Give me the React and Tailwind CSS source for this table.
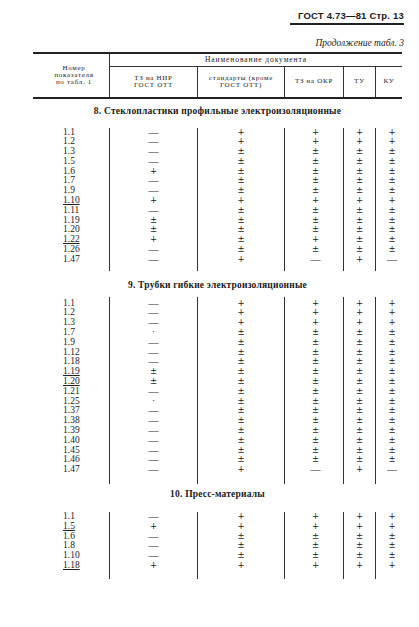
import React from "react";

// ширины колонок таблицы, px
const COLS = ["w-[77px]", "w-[87px]", "w-[87px]", "w-[59px]", "w-[32px]", "w-[27px]"];

const SECTIONS = [
  {
    title: "8. Стеклопластики профильные электроизоляционные",
    titleClass: "h-[29px] pb-[3px]",
    top: "h-[0px]",
    bottom: "h-[6px]",
    rows: [
      ["1.1", "—", "+", "+", "+", "+"],
      ["1.2", "—", "+", "+", "+", "+"],
      ["1.3", "—", "±", "±", "±", "±"],
      ["1.5", "—", "±", "±", "±", "±"],
      ["1.6", "+", "±", "±", "±", "±"],
      ["1.7", "—", "±", "±", "±", "±"],
      ["1.9", "—", "±", "±", "±", "±"],
      ["1.10", "+", "+", "+", "+", "+", true],
      ["1.11", "—", "±", "±", "±", "±"],
      ["1.19", "±", "±", "±", "±", "±"],
      ["1.20", "±", "±", "±", "±", "±"],
      ["1.22", "+", "±", "+", "±", "±", true],
      ["1.26", "—", "±", "±", "±", "±"],
      ["1.47", "—", "+", "—", "+", "—"],
    ],
  },
  {
    title: "9. Трубки гибкие электроизоляционные",
    titleClass: "h-[26px] pt-[2px]",
    top: "h-[2px]",
    bottom: "h-[9px]",
    rows: [
      ["1.1", "—", "+", "+", "+", "+"],
      ["1.2", "—", "+", "+", "+", "+"],
      ["1.3", "—", "+", "+", "+", "+"],
      ["1.7", "·", "±", "±", "±", "±"],
      ["1.9", "—", "±", "±", "±", "±"],
      ["1.12", "—", "±", "±", "±", "±"],
      ["1.18", "—", "±", "±", "±", "±"],
      ["1.19", "±", "±", "±", "±", "±", true],
      ["1.20", "±", "±", "±", "±", "±", true],
      ["1.21", "—", "±", "±", "±", "±"],
      ["1.25", "·", "±", "±", "±", "±"],
      ["1.37", "—", "±", "±", "±", "±"],
      ["1.38", "—", "±", "±", "±", "±"],
      ["1.39", "—", "±", "±", "±", "±"],
      ["1.40", "—", "±", "±", "±", "±"],
      ["1.45", "—", "±", "±", "±", "±"],
      ["1.46", "—", "±", "±", "±", "±"],
      ["1.47", "—", "+", "—", "+", "—"],
    ],
  },
  {
    title: "10. Пресс-материалы",
    titleClass: "h-[28px] pb-[8px]",
    top: "h-[0px]",
    bottom: "h-[8px]",
    rows: [
      ["1.1", "—", "+", "+", "+", "+"],
      ["1.5", "+", "+", "+", "+", "+", true],
      ["1.6", "—", "±", "±", "±", "±"],
      ["1.8", "—", "±", "±", "±", "±"],
      ["1.10", "—", "±", "±", "±", "±"],
      ["1.18", "+", "+", "+", "+", "+", true],
    ],
  },
];

const serif = { fontFamily: '"Liberation Serif", "DejaVu Serif", serif' };
const symFont = { fontFamily: '"DejaVu Serif", serif' };

function Mark({ v }) {
  // тире оставляем в Liberation, плюсы — в DejaVu (крупнее, как в скане)
  if (v === "—") return <span className="text-[10px]">—</span>;
  return (
    <span className="text-[8.5px]" style={symFont}>
      {v}
    </span>
  );
}

function DataRow({ row }) {
  const [num, ...vals] = row;
  const underline = row[6] === true;
  return (
    <div className="flex h-[9.8px] leading-[9.8px]">
      <div className={`${COLS[0]} border-r border-[#333] pl-[30px]`}>
        <span className={underline ? "underline decoration-1 underline-offset-[1px] decoration-[#222]" : ""}>{num}</span>
      </div>
      {vals.slice(0, 5).map((v, i) => (
        <div
          key={i}
          className={`${COLS[i + 1]} text-center ${i > 0 ? "border-l border-[#333]" : ""} ${i === 2 ? "pl-[3px]" : ""} ${i === 4 ? "pl-[6px]" : ""}`}
        >
          <Mark v={v} />
        </div>
      ))}
    </div>
  );
}

function Spacer({ className }) {
  return (
    <div className={`flex ${className}`}>
      {COLS.map((c, i) => (
        <div key={i} className={`${c} ${i === 0 ? "border-r border-[#333]" : ""} ${i > 1 ? "border-l border-[#333]" : ""}`} />
      ))}
    </div>
  );
}

export default function App() {
  return (
    <div className="w-[419px] h-[627px] bg-white text-[#1a1a1a] overflow-hidden" style={serif}>
      {/* колонтитул */}
      <div className="pt-[10px] pr-[15px] flex flex-col items-end">
        <div
          className="h-[12px] leading-[12px] text-[9.5px] font-bold tracking-[0.2px]"
          style={{ fontFamily: '"Liberation Sans", Arial, sans-serif' }}
        >
          ГОСТ 4.73—81 Стр. 13
        </div>
        <div className="w-[114px] h-[1.5px] bg-[#222] mt-[1px]" />
        <div className="mt-[12px] h-[12px] leading-[12px] text-[9.5px] italic">
          Продолжение табл. 3
        </div>
      </div>

      <div className="ml-[33px] w-[369px] mt-[3px] text-[9.5px]">
        {/* шапка таблицы */}
        <div className="flex border-t-2 border-b-2 border-[#222] text-[7px] tracking-[0.7px]">
          <div className={`${COLS[0]} border-r border-[#333] flex flex-col items-center justify-center leading-[7px] pl-[6px]`}>
            <span>Номер</span>
            <span>показателя</span>
            <span>по табл. 1</span>
          </div>
          <div className="flex-1 flex flex-col">
            <div className="h-[13px] border-b border-[#333] flex items-center justify-center tracking-[0.9px] text-[7.5px]">
              Наименование документа
            </div>
            <div className="h-[30px] flex leading-[7px]">
              <div className={`${COLS[1]} flex flex-col items-center justify-center`}>
                <span>ТЗ на НИР</span>
                <span>ГОСТ ОТТ</span>
              </div>
              <div className={`${COLS[2]} border-l border-[#333] flex flex-col items-center justify-center`}>
                <span>стандарты (кроме</span>
                <span>ГОСТ ОТТ)</span>
              </div>
              <div className={`${COLS[3]} border-l border-[#333] flex items-center justify-center`}>ТЗ на ОКР</div>
              <div className={`${COLS[4]} border-l border-[#333] flex items-center justify-center`}>ТУ</div>
              <div className={`${COLS[5]} border-l border-[#333] flex items-center justify-center`}>КУ</div>
            </div>
          </div>
        </div>

        {SECTIONS.map((s) => (
          <div key={s.title}>
            <div className={`${s.titleClass} flex items-center justify-center font-bold text-[9.5px] tracking-[0.2px]`}>
              {s.title}
            </div>
            <Spacer className={s.top} />
            {s.rows.map((r) => (
              <DataRow key={r[0]} row={r} />
            ))}
            <Spacer className={s.bottom} />
          </div>
        ))}
      </div>
    </div>
  );
}
